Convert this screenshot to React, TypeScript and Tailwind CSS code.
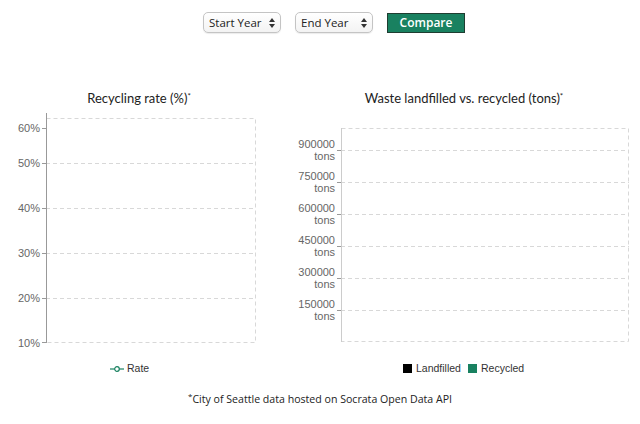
const rateTicks = [
  { label: "60%", y: 127, line: false },
  { label: "50%", y: 162, line: true },
  { label: "40%", y: 207, line: true },
  { label: "30%", y: 252, line: true },
  { label: "20%", y: 297, line: true },
];

const tonTicks = [
  { label: "900000", y: 149 },
  { label: "750000", y: 181 },
  { label: "600000", y: 213 },
  { label: "450000", y: 245 },
  { label: "300000", y: 277 },
  { label: "150000", y: 309 },
];

function YearSelect({ label }: { label: string }) {
  return (
    <div className="flex h-[21px] w-[78px] items-center justify-between rounded-[5px] border border-[#c4c4c4] bg-gradient-to-b from-white to-[#f3f3f3] pl-[5px] pr-[5px] text-[11.5px] text-[#222] shadow-[0_1px_1px_rgba(0,0,0,0.08)]">
      <span>{label}</span>
      <svg width="6" height="10" viewBox="0 0 6 10">
        <path d="M3 0 L6 4 L0 4 Z" fill="#333" />
        <path d="M3 10 L6 6 L0 6 Z" fill="#333" />
      </svg>
    </div>
  );
}

function RateChart() {
  return (
    <svg width="270" height="240" viewBox="0 110 270 240" className="block">
      <rect x="46.5" y="117.5" width="209" height="224" fill="none" stroke="#d8d8d8" strokeDasharray="4 3" />
      {rateTicks.map((t) => (
        <g key={t.label}>
          {t.line && <line x1="46" x2="255" y1={t.y + 0.5} y2={t.y + 0.5} stroke="#d8d8d8" strokeDasharray="4 3" />}
          <line x1="42" x2="46" y1={t.y + 0.5} y2={t.y + 0.5} stroke="#999" />
          <text x="40" y={t.y + 4} textAnchor="end" fontSize="11" fill="#666" fontFamily="Liberation Sans, Arial, sans-serif">
            {t.label}
          </text>
        </g>
      ))}
      <line x1="42" x2="46" y1="341.5" y2="341.5" stroke="#999" />
      <text x="40" y="346" textAnchor="end" fontSize="11" fill="#666" fontFamily="Liberation Sans, Arial, sans-serif">
        10%
      </text>
      <line x1="46.5" x2="46.5" y1="112" y2="342" stroke="#999" />
    </svg>
  );
}

function TonsChart() {
  return (
    <svg width="370" height="240" viewBox="270 110 370 240" className="block">
      <rect x="341.5" y="127.5" width="287" height="213" fill="none" stroke="#d8d8d8" strokeDasharray="4 3" />
      {tonTicks.map((t) => (
        <g key={t.label}>
          <line x1="341" x2="629" y1={t.y + 0.5} y2={t.y + 0.5} stroke="#d8d8d8" strokeDasharray="4 3" />
          <line x1="337" x2="341" y1={t.y + 0.5} y2={t.y + 0.5} stroke="#999" />
          <text x="335" y={t.y - 2} textAnchor="end" fontSize="11" fill="#666" fontFamily="Liberation Sans, Arial, sans-serif">
            {t.label}
          </text>
          <text x="335" y={t.y + 10} textAnchor="end" fontSize="11" fill="#666" fontFamily="Liberation Sans, Arial, sans-serif">
            tons
          </text>
        </g>
      ))}
      <line x1="341.5" x2="341.5" y1="127" y2="341" stroke="#ccc" />
    </svg>
  );
}

export default function App() {
  return (
    <div className="h-[424px] w-[640px] bg-white text-[#222]" style={{ fontFamily: "'Open Sans', 'Noto Sans', sans-serif" }}>
      <div className="flex items-center justify-center gap-[14px] pt-[12px] pl-[28px]">
        <YearSelect label="Start Year" />
        <YearSelect label="End Year" />
        <button className="h-[20px] w-[78px] border border-[#1f3d31] bg-[#198160] text-[12px] font-semibold text-white">Compare</button>
      </div>

      <div className="flex pt-[57px]" style={{ fontFamily: "Lato, 'Noto Sans', sans-serif" }}>
        <div className="w-[270px]">
          <h2 className="pl-[8px] text-center text-[13px] leading-[16px] text-[#222]">
            Recycling rate (%)<sup className="text-[8px]">*</sup>
          </h2>
        </div>
        <div className="w-[370px]">
          <h2 className="pl-[18px] text-center text-[13px] leading-[16px] text-[#222]">
            Waste landfilled vs. recycled (tons)<sup className="text-[8px]">*</sup>
          </h2>
        </div>
      </div>

      <div className="mt-[5px] flex">
        <RateChart />
        <TonsChart />
      </div>

      <div className="mt-[10px] flex text-[10.5px] text-[#333]" style={{ fontFamily: "'Liberation Sans', Arial, sans-serif" }}>
        <div className="flex w-[270px] items-center gap-[3px] pl-[110px]">
          <svg width="14" height="8" viewBox="0 0 14 8">
            <line x1="0" x2="14" y1="4" y2="4" stroke="#198160" strokeWidth="1.2" />
            <circle cx="7" cy="4" r="2.3" fill="white" stroke="#198160" strokeWidth="1.2" />
          </svg>
          <span>Rate</span>
        </div>
        <div className="flex items-center gap-[4px] pl-[133px]">
          <span className="h-[9px] w-[9px] bg-black" />
          <span>Landfilled</span>
          <span className="ml-[3px] h-[9px] w-[9px] bg-[#198160]" />
          <span>Recycled</span>
        </div>
      </div>

      <p className="mt-[15px] text-center text-[10.6px] text-[#222]" style={{ fontFamily: "'Open Sans', 'Noto Sans', sans-serif" }}>
        <sup className="text-[8px]">*</sup>City of Seattle data hosted on Socrata Open Data API
      </p>
    </div>
  );
}
